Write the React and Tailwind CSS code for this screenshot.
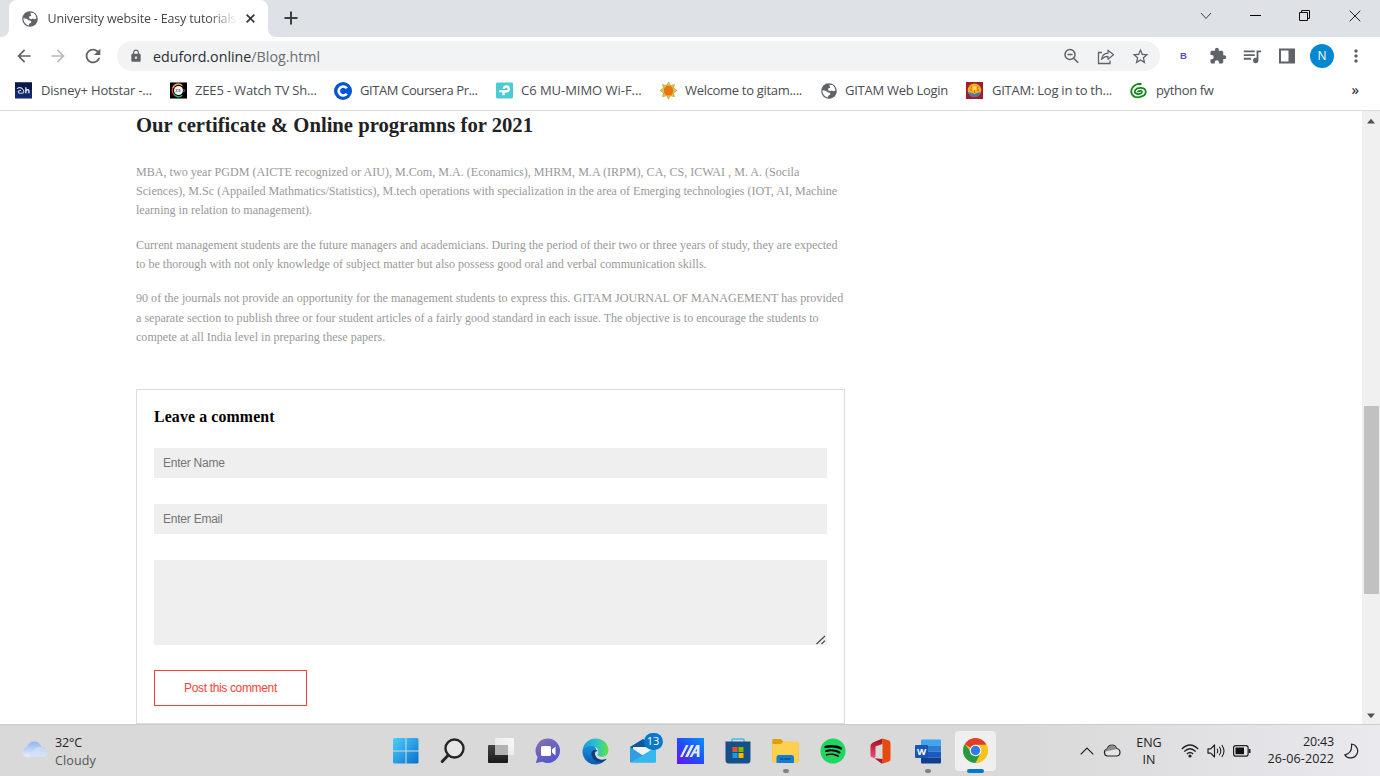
import React from "react";
import {
  MdArrowBack, MdArrowForward, MdRefresh, MdLock, MdExtension,
  MdQueueMusic, MdMoreVert, MdStarBorder,
} from "react-icons/md";
import { FaSpotify } from "react-icons/fa";

const UI = "font-['Open_Sans','Noto_Sans',sans-serif]";
const SANS = "font-['Liberation_Sans',sans-serif]";

function Bookmark({ width, gap, icon, label, tracking }) {
  return (
    <div className={`flex shrink-0 items-center ${width} ${gap}`}>
      <span className="flex h-[17px] w-[17px] shrink-0 items-center justify-center">{icon}</span>
      <span className={`pb-[2px] text-[13px] leading-[18px] whitespace-nowrap text-[#4a4d51] ${tracking}`}>{label}</span>
    </div>
  );
}

const GlobeIcon = () => (
  <svg width="18" height="18" viewBox="0 0 18 18" className="shrink-0">
    <circle cx="9" cy="9" r="7.800" fill="#5f6368" />
    <path d="M9.300 2.700L12.600 3Q15.300 5 15.500 8.200L13.700 9.300 11.800 8.600 10.300 9.200 8 8.200 8.200 6.400 10.200 5.800z" fill="#fff" />
    <path d="M2.300 8.300L5.600 8.800 7.800 10.200 10.300 11 9.800 12.900 8.200 13.700 7.700 15.600Q2.700 14.300 2.300 8.300z" fill="#fff" />
  </svg>
);
const HotstarIcon = () => (
  <svg width="18" height="17" viewBox="0 0 18 17">
    <rect width="18" height="17" fill="#14296a" />
    <rect width="18" height="8" fill="#0b1744" />
    <path d="M2 6.500q4-2.500 6.500 1t-2 4q-3 .2-3-1.700 0-1.500 3-1.300" fill="none" stroke="#c9d6f5" strokeWidth="1.100" />
    <path d="M11.500 5v6.500M11.500 8.500q3-2 3.200.5v2.500" fill="none" stroke="#fff" strokeWidth="1.300" />
  </svg>
);
const ZeeIcon = () => (
  <svg width="18" height="17" viewBox="0 0 18 17">
    <rect width="18" height="17" fill="#000" />
    <path d="M13 3.500A6 6 0 0 0 3 6" fill="none" stroke="#f0a04a" strokeWidth="1.500" />
    <path d="M3 6a6 6 0 0 0 1 6.500" fill="none" stroke="#d33a4d" strokeWidth="1.500" />
    <path d="M4 12.500a6 6 0 0 0 9 1" fill="none" stroke="#2fb16a" strokeWidth="1.500" />
    <circle cx="9" cy="8.500" r="4.800" fill="#f3f3f3" />
    <path d="M6 7.500h2l-2 2h2M9 7.500h2M9 8.500h2M9 9.500h2M13.500 7.500h2v2h-2" stroke="#777" strokeWidth=".8" fill="none" />
  </svg>
);
const CourseraIcon = () => (
  <svg width="18" height="18" viewBox="0 0 18 18" className="shrink-0">
    <circle cx="9" cy="9" r="9" fill="#0056d2" />
    <path d="M12.800 6.300A4.500 4.500 0 1 0 12.800 11.700" fill="none" stroke="#fff" strokeWidth="2.700" />
  </svg>
);
const TpIcon = () => (
  <svg width="18" height="17" viewBox="0 0 18 17">
    <rect width="18" height="17" rx="1.500" fill="#4acbd6" />
    <path d="M3.500 9.200h3.200M8 13.500V9.500h3a2.600 2.600 0 1 0-2.600-2.600" fill="none" stroke="#fff" strokeWidth="2.500" />
  </svg>
);
const SunIcon = () => (
  <svg width="17" height="17" viewBox="0 0 17 17">
    <path d="M8.500 0L10.500 3.500 14.500 2.500 13.500 6 17 8.500 13.500 11 14.500 14.700 10.500 13.700 8.500 17 6.500 13.700 2.500 14.700 3.500 11 0 8.500 3.500 6 2.500 2.500 6.500 3.500z" fill="#dcc84e" stroke="#a89a4a" strokeWidth=".6" />
    <ellipse cx="8.500" cy="8.600" rx="4.700" ry="5" fill="#ee7410" />
  </svg>
);
const GitamIcon = () => (
  <svg width="17" height="17" viewBox="0 0 17 17">
    <rect width="17" height="17" fill="#a11c2f" />
    <circle cx="8.500" cy="8.300" r="6.800" fill="#f2b01e" />
    <path d="M1.900 10a6.800 6.800 0 0 0 13.200 0l-3 .8-3.600 1.200-3.600-1.200z" fill="#4b74b5" />
    <circle cx="8.500" cy="6.500" r="2.300" fill="#f7dc4f" />
    <path d="M5 4.500l1 2M12 4.500l-1 2M8.500 8v3M4 8h2M11 8h2" stroke="#c8571c" strokeWidth=".9" />
  </svg>
);
const SnakeIcon = () => (
  <svg width="18" height="17" viewBox="0 0 18 17">
    <path d="M10 1.500Q4.500 1.800 2 6.500-.3 12.500 5 15.200q5.500 1.500 10-1.600 3.200-3.600.5-6.600Q12 4.700 7.500 6.300 4 8.500 5.600 11.200q2.700 2 6.300.2Q13.500 9.500 11.500 9 9.500 8.700 8.500 9.700" fill="none" stroke="#128a1c" strokeWidth="1.900" strokeLinecap="round" />
    <ellipse cx="10" cy="1.600" rx="2.400" ry="1.300" fill="#128a1c" />
  </svg>
);

function BrowserChrome() {
  return (
    <header className={`shrink-0 ${UI}`}>
      <div className="flex h-[37px] items-start bg-[#dee1e6]">
        <div className="h-[37px] w-[9px] bg-white"><div className="h-full w-full rounded-br-[8px] bg-[#dee1e6]" /></div>
        <div className="flex h-[37px] w-[259px] items-center rounded-t-[8px] bg-white pl-[12px]">
          <GlobeIcon />
          <div className="ml-[8.500px] flex w-[190px] mask-r-from-85% mask-r-to-100%">
            <span className="text-[12.500px] leading-[18px] tracking-[-0.170px] whitespace-nowrap text-[#45484d]">University website - Easy tutorials</span>
          </div>
          <svg width="9" height="9" viewBox="0 0 9 9" className="ml-[8px] shrink-0"><path d="M.7.700l7.600 7.600M8.300.700L.7 8.300" stroke="#34373b" strokeWidth="1.700" /></svg>
        </div>
        <div className="h-[37px] w-[9px] bg-white"><div className="h-full w-full rounded-bl-[8px] bg-[#dee1e6]" /></div>
        <svg width="14" height="14" viewBox="0 0 14 14" className="mt-[11px] ml-[7px]"><path d="M7 .5v13M.5 7h13" stroke="#3c4043" strokeWidth="2" /></svg>
        <div className="ml-auto flex h-[31px] items-center">
          <svg width="12" height="8" viewBox="0 0 12 8" className="mr-[38px]"><path d="M1 1l5 5.500L11 1" fill="none" stroke="#444" strokeWidth="1" /></svg>
          <div className="mr-[38px] h-px w-[11px] bg-black" />
          <svg width="12" height="12" viewBox="0 0 12 12" className="mr-[38px]"><path d="M.5 2.500h8v8h-8zM2.500 2.500v-2h8v8h-2" fill="none" stroke="#111" /></svg>
          <svg width="12" height="12" viewBox="0 0 12 12" className="mr-[19px]"><path d="M.7.700l10.600 10.600M11.300.700L.7 11.300" fill="none" stroke="#222" /></svg>
        </div>
      </div>
      <div className="flex h-[38px] items-center bg-white text-[#5f6368]">
        <MdArrowBack className="ml-[14px] h-[20px] w-[20px]" />
        <MdArrowForward className="ml-[14px] h-[20px] w-[20px] text-[#b9bbbe]" />
        <MdRefresh className="ml-[14px] h-[22px] w-[22px]" />
        <div className="ml-[13px] flex h-[30px] w-[1043px] items-center rounded-full bg-[#f1f3f4] pr-[10px] pl-[12px]">
          <MdLock className="h-[14px] w-[14px]" />
          <span className="ml-[10px] pt-[1px] text-[14.250px] whitespace-nowrap text-[#2b2e33]">eduford.online<span className="text-[#6a6e73]">/Blog.html</span></span>
          <svg width="17" height="17" viewBox="0 0 17 17" className="ml-auto"><circle cx="7" cy="6.500" r="5" fill="none" stroke="#5f6368" strokeWidth="1.500" /><path d="M4.500 6.500h5M10.700 10.300l4.500 4.500" stroke="#5f6368" strokeWidth="1.600" /></svg>
          <svg width="18" height="17" viewBox="0 0 18 17" className="ml-[17px]"><path d="M5 4.500H1.500v11h11.500v-3" fill="none" stroke="#5f6368" strokeWidth="1.300" /><path d="M4.500 11.500Q5.500 5.500 11 5.200V2.200l5.500 4.600L11 11.300V8.300Q7 8.300 4.500 11.500z" fill="none" stroke="#5f6368" strokeWidth="1.200" strokeLinejoin="round" /></svg>
          <MdStarBorder className="ml-[16px] h-[19px] w-[19px]" />
        </div>
        <span className={`ml-[20px] w-[8px] text-[9.500px] font-bold text-[#5450b5] ${SANS}`}>B</span>
        <MdExtension className="ml-[21px] h-[18px] w-[18px]" />
        <MdQueueMusic className="ml-[14px] h-[22px] w-[22px]" />
        <svg width="16" height="16" viewBox="0 0 16 16" className="ml-[16px]"><path d="M0 .5h16v15H0zM2 2.500v11h7.500v-11z" fillRule="evenodd" fill="#5f6368" /></svg>
        <span className="ml-[15px] flex h-[24px] w-[24px] items-center justify-center rounded-full bg-[#0288d1] text-[12px] text-white">N</span>
        <MdMoreVert className="ml-[12px] h-[20px] w-[20px]" />
      </div>
      <div className="flex h-[36px] items-center border-b border-[#dadce0] bg-white pb-[4px] pl-[15px]">
        <Bookmark width="w-[155px]" gap="gap-[9px]" icon={<HotstarIcon />} label="Disney+ Hotstar -..." tracking="tracking-[-0.185px]" />
        <Bookmark width="w-[164px]" gap="gap-[8px]" icon={<ZeeIcon />} label="ZEE5 - Watch TV Sh..." tracking="tracking-[-0.165px]" />
        <Bookmark width="w-[162px]" gap="gap-[9px]" icon={<CourseraIcon />} label="GITAM Coursera Pr..." tracking="tracking-[-0.400px]" />
        <Bookmark width="w-[164px]" gap="gap-[8px]" icon={<TpIcon />} label="C6 MU-MIMO Wi-F..." tracking="tracking-[-0.030px]" />
        <Bookmark width="w-[160px]" gap="gap-[8px]" icon={<SunIcon />} label="Welcome to gitam...." tracking="tracking-[-0.310px]" />
        <Bookmark width="w-[146px]" gap="gap-[8px]" icon={<GlobeIcon />} label="GITAM Web Login" tracking="tracking-[-0.270px]" />
        <Bookmark width="w-[164px]" gap="gap-[9px]" icon={<GitamIcon />} label="GITAM: Log in to th..." tracking="tracking-[-0.240px]" />
        <Bookmark width="w-[100px]" gap="gap-[9px]" icon={<SnakeIcon />} label="python fw" tracking="tracking-[-0.350px]" />
        <span className="mr-[21px] ml-auto text-[13.500px] leading-none font-semibold text-[#3c4043]">»</span>
      </div>
    </header>
  );
}

const Line = ({ children, cls }) => (
  <span className={`block w-max whitespace-pre ${cls || ""}`}>{children}</span>
);

function Article() {
  return (
    <main className="ml-[136px] w-[709px] shrink-0 font-['Liberation_Serif',serif]">
      <h1 className="mt-[2px] text-[20.670px] leading-[24px] font-bold text-[#222]"><Line>Our certificate &amp; Online programns for 2021</Line></h1>
      <div className="mt-[26px] flex flex-col gap-[15.500px] text-[12.080px] leading-[19.100px] text-[#999]">
        <p>
          <Line>MBA, two year PGDM (AICTE recognized or AIU), M.Com, M.A. (Econamics), MHRM, M.A (IRPM), CA, CS, ICWAI , M. A. (Socila</Line>
          <Line>Sciences), M.Sc (Appailed Mathmatics/Statistics), M.tech operations with specialization in the area of Emerging technologies (IOT, AI, Machine</Line>
          <Line>learning in relation to management).</Line>
        </p>
        <p>
          <Line>Current management students are the future managers and academicians. During the period of their two or three years of study, they are expected</Line>
          <Line>to be thorough with not only knowledge of subject matter but also possess good oral and verbal communication skills.</Line>
        </p>
        <p>
          <Line>90 of the journals not provide an opportunity for the management students to express this. GITAM JOURNAL OF MANAGEMENT has provided</Line>
          <Line>a separate section to publish three or four student articles of a fairly good standard in each issue. The objective is to encourage the students to</Line>
          <Line>compete at all India level in preparing these papers.</Line>
        </p>
      </div>
      <form className="mt-[42px] flex h-[335px] flex-col items-start border border-[#dcdcdc] px-[17px]">
        <h2 className="mt-[16px] text-[15.800px] leading-[21px] font-bold tracking-[0.150px] text-black"><Line>Leave a comment</Line></h2>
        <div className={`mt-[21px] flex h-[30px] w-[673px] items-center bg-[#efefef] pl-[9px] text-[12px] tracking-[-0.240px] text-[#757575] ${SANS}`}><Line>Enter Name</Line></div>
        <div className={`mt-[26px] flex h-[30px] w-[673px] items-center bg-[#efefef] pl-[9px] text-[12px] tracking-[-0.230px] text-[#757575] ${SANS}`}><Line>Enter Email</Line></div>
        <div className="mt-[26px] flex h-[85px] w-[673px] items-end justify-end bg-[#efefef] pr-[1px]">
          <svg width="10" height="10" viewBox="0 0 10 10"><path d="M.5 9L9 1M5.500 9L9 5.700" stroke="#444" strokeWidth="1.100" /></svg>
        </div>
        <button type="button" className={`mt-[25px] flex h-[36px] w-[153px] items-center justify-center border border-[#f44336] text-[12px] tracking-[-0.350px] text-[#f44336] ${SANS}`}><Line>Post this comment</Line></button>
      </form>
    </main>
  );
}

const WindowsIcon = () => (
  <svg width="26" height="26" viewBox="0 0 26 26">
    <defs><linearGradient id="win" x1="0" y1="0" x2="1" y2="1"><stop offset="0" stopColor="#4fd0fb" /><stop offset="1" stopColor="#0571cf" /></linearGradient></defs>
    <path d="M1.500 0H12.500V12.500H0V1.500Q0 0 1.500 0zM13.500 0H24Q25.500 0 25.500 1.500V12.500H13.500zM0 13.500H12.500V25.500H1.500Q0 25.500 0 24zM13.500 13.500H25.500V24Q25.500 25.500 24 25.500H13.500z" fill="url(#win)" />
  </svg>
);
const SearchIcon = () => (
  <svg width="26" height="26" viewBox="0 0 26 26"><circle cx="14.500" cy="10.500" r="9" fill="#e6e6e6" stroke="#262626" strokeWidth="2.400" /><path d="M8.200 17.200L2.200 23.500" stroke="#262626" strokeWidth="3" strokeLinecap="round" /></svg>
);
const TaskViewIcon = () => (
  <svg width="26" height="26" viewBox="0 0 26 26">
    <defs>
      <linearGradient id="tv" x1="0" y1="0" x2="0" y2="1"><stop offset="0" stopColor="#444" /><stop offset="1" stopColor="#191919" /></linearGradient>
      <linearGradient id="tv2" x1="1" y1="0" x2="0" y2="1"><stop offset="0" stopColor="#fafafa" /><stop offset="1" stopColor="#e2e2e2" /></linearGradient>
    </defs>
    <rect x="0" y="7" width="20" height="18" rx="1" fill="url(#tv)" /><path d="M7 1.500Q7 0 8.500 0H24.500Q26 0 26 1.500V17H7z" fill="url(#tv2)" /><rect x="7" y="7" width="13" height="10" fill="#b3b3b3" />
  </svg>
);
const ChatIcon = () => (
  <svg width="26" height="26" viewBox="0 0 26 26">
    <defs><linearGradient id="chat" x1="0" y1="0" x2=".6" y2="1"><stop offset="0" stopColor="#8b6fb0" /><stop offset="1" stopColor="#5257cf" /></linearGradient></defs>
    <path d="M13 .5a12.200 12.200 0 1 1-5.500 23.200L.8 25l1.700-5.800A12.200 12.200 0 0 1 13 .5z" fill="url(#chat)" />
    <rect x="6" y="8" width="10" height="10" rx="1.500" fill="#fff" /><path d="M17 11.500l3.500-3v9L17 14.500z" fill="#fff" />
  </svg>
);
const EdgeIcon = () => (
  <svg width="27" height="27" viewBox="0 0 27 27">
    <defs>
      <linearGradient id="eg1" x1="0" y1=".4" x2="1" y2=".4"><stop offset="0" stopColor="#1b9bdc" /><stop offset=".55" stopColor="#2bc4c8" /><stop offset="1" stopColor="#66e33e" /></linearGradient>
      <linearGradient id="eg2" x1="0" y1="0" x2="0" y2="1"><stop offset="0" stopColor="#1b91dd" /><stop offset="1" stopColor="#0b5cb0" /></linearGradient>
    </defs>
    <path d="M.5 13.500C.5 9 5 6.500 9 7c4 .5 5.500 3 5 5.500-3 1-3.500 5 0 8 3.500 2 7.500 2 10.500.3C22 24.500 18 26.500 13.500 26.500A13 13 0 0 1 .5 13.500z" fill="url(#eg2)" />
    <path d="M.6 12C2 4.500 7.500.5 13.500.5c8 0 13 5.500 13 11.500 0 4.500-3.200 7-6.700 7-3.300 0-5-1.400-4.600-2.500 1.600-1.600 1.600-5-.6-6.700C11 7.200 4 7 .6 12z" fill="url(#eg1)" />
    <path d="M9.700 14c-1.500 5 3 10.500 9 10 2.800-.3 4.900-1.600 6-3.200-4.300 2-9.300 1-11-2.800-.8-2.300.3-4.200 1.900-4.400.2-1-.4-1.400-1.500-1.500-1.900-.1-3.700.5-4.400 1.900z" fill="#103f7d" />
    <path d="M14.500 13.300a2.300 2.300 0 0 0-1 3.700q1.500 3.500 6 4 4 .2 6.300-1.500l.7-3.500q-2.500 3-6.700 3-3.300 0-4.600-2.500 1.200-1.500 .8-3.200z" fill="#dadada" />
  </svg>
);
const MailIcon = () => (
  <svg width="27" height="24" viewBox="0 0 27 24">
    <path d="M0 8L13 0l13 8v15H0z" fill="#0c599c" /><path d="M3 8h20v8H3z" fill="#f2f2f2" /><path d="M0 8l13 8.500L26 8v14.500q0 1-1 1H1q-1 0-1-1z" fill="#2f9fe2" /><path d="M26 8v14.500q0 1-1 1H1z" fill="#33b9ef" />
  </svg>
);
const ArmouryIcon = () => (
  <svg width="27" height="26" viewBox="0 0 27 26">
    <defs><linearGradient id="arm" x1="0" y1="1" x2="1" y2="0"><stop offset="0" stopColor="#6a11f5" /><stop offset=".5" stopColor="#1e50f7" /><stop offset="1" stopColor="#0a90ff" /></linearGradient></defs>
    <rect width="27" height="26" fill="url(#arm)" />
    <path d="M3 19L9 7h2.500l-6 12zM8 19l6-12H17l-6 12zM12.500 19l7-12h3v12h-2.700v-3.500h-2.800L15.200 19zM18.300 13.500h1.600V10.500z" fill="#e5e8ff" fillRule="evenodd" />
  </svg>
);
const StoreIcon = () => (
  <svg width="26" height="26" viewBox="0 0 26 26">
    <path d="M7 5V2Q7 1 8 1H18Q19 1 19 2V5" fill="none" stroke="#3bbdec" strokeWidth="1.600" />
    <path d="M.5 3.500h25v18.500q0 3.500-3.500 3.500H4Q.5 25.500.5 22z" fill="#184f86" />
    <path d="M7.500 9h5v5h-5z" fill="#f25022" /><path d="M13.500 9h5v5h-5z" fill="#7fba00" /><path d="M7.500 15h5v5h-5z" fill="#00a4ef" /><path d="M13.500 15h5v5h-5z" fill="#ffb900" />
  </svg>
);
const FolderIcon = () => (
  <svg width="27" height="25" viewBox="0 0 27 25">
    <path d="M1.500 0H9l2.500 3H25q1.500 0 1.500 1.500V22H.3V1.500Q.3 0 1.500 0z" fill="#dfa000" />
    <path d="M.3 5H9l2.500-2.500H25q1.500 0 1.500 1.500v18.500q0 1.500-1.500 1.500H1.800q-1.500 0-1.500-1.500z" fill="#ffd04e" />
    <path d="M4.500 24v-5.500Q4.500 16 7 16h12.500q2.500 0 2.500 2.500V24z" fill="#117dd4" /><path d="M8 20h10.500" stroke="#0b4f91" strokeWidth="1.500" />
  </svg>
);
const OfficeIcon = () => (
  <svg width="21" height="26" viewBox="0 0 21 26">
    <defs><linearGradient id="of" x1="0" y1="0" x2="0" y2="1"><stop offset="0" stopColor="#9e1018" /><stop offset="1" stopColor="#ee4a7c" /></linearGradient></defs>
    <path d="M12.500.5L3 4.500Q.5 5.500.5 8v10.500l3.500 1.500q1.500-.5 1.500-2V8.500L12.500 6z" fill="url(#of)" />
    <path d="M12.500.5L18.500 2.200Q20.500 3 20.500 5v16q0 2-2 2.700L12.500 25.500z" fill="#e8490f" />
    <path d="M4.500 20.300l8 .7V25.500h-1z" fill="#b41424" />
  </svg>
);
const WordIcon = () => (
  <svg width="26" height="25" viewBox="0 0 26 25">
    <path d="M6 1.500Q6 .5 7 .5H25q1 0 1 1V6.500H6z" fill="#41a5ee" /><path d="M6 6.500h20v6H6z" fill="#2b7cd3" /><path d="M6 12.500h20v6H6z" fill="#185abd" /><path d="M6 18.500h20v5q0 1-1 1H7q-1 0-1-1z" fill="#103f91" />
    <rect x="0" y="6" width="13" height="13" rx="1" fill="#1a56b4" />
    <text x="6.500" y="16" textAnchor="middle" fontSize="9.500" fontWeight="700" fill="#fff" fontFamily="Open Sans, sans-serif">W</text>
  </svg>
);
const ChromeIcon = () => (
  <svg width="25" height="25" viewBox="0 0 24 24">
    <circle cx="12" cy="12" r="12" fill="#fcc31e" />
    <path d="M12 12L1.610 6A12 12 0 0 1 22.390 6z" fill="#e33b2e" />
    <path d="M1.610 6A12 12 0 0 0 12 24L17.200 15 12 12H6.800z" fill="#279847" />
    <path d="M12 6.500H22.660A12 12 0 0 1 12 24L17 14.500z" fill="#fcc31e" />
    <circle cx="12" cy="12" r="5.600" fill="#fff" /><circle cx="12" cy="12" r="4.500" fill="#2f7bea" />
  </svg>
);

function TaskItem({ children, dot }) {
  return (
    <div className="relative flex h-[52px] w-[47.500px] shrink-0 items-center justify-center pt-[1px]">
      {children}
      {dot && <span className="absolute bottom-[4px] left-[20.500px] h-[4px] w-[6px] rounded-full bg-[#828282]" />}
    </div>
  );
}

function Taskbar() {
  return (
    <footer className={`flex h-[52px] shrink-0 items-center border-t border-[#cdcdcd] bg-linear-to-r from-[#d9d9d9] from-74% to-[#e9e9ee] text-[12.500px] text-[#222] ${UI}`}>
      <div className="flex w-[382px] items-center gap-[8px] pt-[2px] pl-[21px]">
        <svg width="26" height="17" viewBox="0 0 26 17" className="mb-[5px]">
          <defs><linearGradient id="cl" x1="0" y1="0" x2="0" y2="1"><stop offset="0" stopColor="#8fb5ee" /><stop offset="1" stopColor="#e9f0fa" /></linearGradient></defs>
          <path d="M6 16a5 5 0 0 1-.3-9.800Q8 .5 13 .5q5.500 0 7.300 5.300Q25.800 6 25.800 11T21 16z" fill="url(#cl)" />
          <path d="M12 11q2-5.500 8-4.800 5.800.3 5.800 5Q25.500 16 21 16H8q1-4 4-5z" fill="#cfdef4" fillOpacity=".7" />
        </svg>
        <div className="flex flex-col leading-[17.500px]"><Line cls="tracking-[-0.100px]">32°C</Line><Line cls="text-[#555] tracking-[0.130px]">Cloudy</Line></div>
      </div>
      <nav className="flex">
        <TaskItem><WindowsIcon /></TaskItem>
        <TaskItem><SearchIcon /></TaskItem>
        <TaskItem><TaskViewIcon /></TaskItem>
        <TaskItem><ChatIcon /></TaskItem>
        <TaskItem><EdgeIcon /></TaskItem>
        <TaskItem><MailIcon /><span className="absolute top-[8px] left-[24px] flex h-[17px] w-[19px] items-center justify-center rounded-full bg-[#0778d0] text-[11px] text-white">13</span></TaskItem>
        <TaskItem><ArmouryIcon /></TaskItem>
        <TaskItem><StoreIcon /></TaskItem>
        <TaskItem dot><FolderIcon /></TaskItem>
        <TaskItem><span className="flex h-[20px] w-[20px] items-center justify-center rounded-full bg-black"><FaSpotify className="h-[26px] w-[26px] shrink-0 text-[#1ed760]" /></span></TaskItem>
        <TaskItem><OfficeIcon /></TaskItem>
        <TaskItem dot><WordIcon /></TaskItem>
        <div className="relative flex h-[52px] w-[47.500px] items-center justify-center">
          <div className="flex h-[40px] w-[41px] items-center justify-center rounded-[4px] bg-[#efefef]"><ChromeIcon /></div>
          <span className="absolute bottom-[4px] left-[15px] h-[4px] w-[17px] rounded-full bg-[#0778d0]" />
        </div>
      </nav>
      <div className="ml-auto flex items-center pr-[20px]">
        <svg width="14" height="8" viewBox="0 0 14 8"><path d="M.7 7.300L7 1l6.300 6.300" fill="none" stroke="#222" strokeWidth="1.200" /></svg>
        <svg width="18" height="13" viewBox="0 0 18 13" className="ml-[9px]"><path d="M4.500 12A3.600 3.600 0 0 1 4 5Q5.500 1 9 1t4.500 3.500Q17 5 17 8.500 16.700 12 13.500 12z" fill="#e4e4e4" stroke="#222" strokeWidth="1.200" /><path d="M2 7.500Q2.500 5 4 5 5.500 1.500 9 1.500t4.500 3.500L9.500 6z" fill="#8b8b8b" /></svg>
        <div className="ml-[15px] flex w-[26px] flex-col items-center pt-[2px] leading-[16.500px]"><Line>ENG</Line><Line>IN</Line></div>
        <svg width="18" height="14" viewBox="0 0 18 14" className="ml-[19px]"><path d="M.8 5Q9-3 17.200 5M3.300 7.500q5.700-5.500 11.400 0M5.800 10q3.200-3 6.400 0" fill="none" stroke="#222" strokeWidth="1.200" /><circle cx="9" cy="12" r="1.600" fill="#222" /></svg>
        <svg width="19" height="14" viewBox="0 0 19 14" className="ml-[8px]"><path d="M1 4.800h2.700L7.500 1v12L3.700 9.200H1z" fill="none" stroke="#222" strokeWidth="1.200" strokeLinejoin="round" /><path d="M10 4.800q1.500 2.200 0 4.400M12.300 2.800q3 4.200 0 8.400M14.800 1q4.400 6 0 12" fill="none" stroke="#222" strokeWidth="1.100" /></svg>
        <svg width="18" height="12" viewBox="0 0 18 12" className="ml-[7px]"><rect x=".6" y=".6" width="14.500" height="10.500" rx="2.200" fill="none" stroke="#222" strokeWidth="1.200" /><rect x="2.500" y="2.500" width="8.500" height="6.700" fill="#111" /><path d="M16.500 4v4" stroke="#222" strokeWidth="2" /></svg>
        <div className="ml-[16px] flex w-[67px] flex-col items-end leading-[16.500px]"><Line cls="tracking-[-0.180px]">20:43</Line><Line cls="tracking-[0.130px]">26-06-2022</Line></div>
        <svg width="16" height="16" viewBox="0 0 16 16" className="ml-[10px]"><path d="M7.500 1a7 7 0 1 1-6.700 10.800Q8.500 10.500 7.500 1z" fill="none" stroke="#222" strokeWidth="1.200" strokeLinejoin="round" /></svg>
      </div>
    </footer>
  );
}

export default function App() {
  return (
    <div className="flex h-[776px] w-[1380px] flex-col overflow-hidden bg-white">
      <BrowserChrome />
      <div className="flex h-[613px] shrink-0 justify-between overflow-hidden">
        <Article />
        <div className="flex w-[18px] flex-col items-center bg-[#f0f0f0]">
          <svg width="10" height="6" viewBox="0 0 10 6" className="mt-[7px] shrink-0"><path d="M1 5.500L5 .8l4 4.700z" fill="#505050" /></svg>
          <div className="mt-[282px] h-[188px] w-[15px] shrink-0 bg-[#c1c1c1]" />
          <svg width="10" height="6" viewBox="0 0 10 6" className="mt-auto mb-[5px] shrink-0"><path d="M1 .5L5 5.200 9 .5z" fill="#505050" /></svg>
        </div>
      </div>
      <Taskbar />
    </div>
  );
}
